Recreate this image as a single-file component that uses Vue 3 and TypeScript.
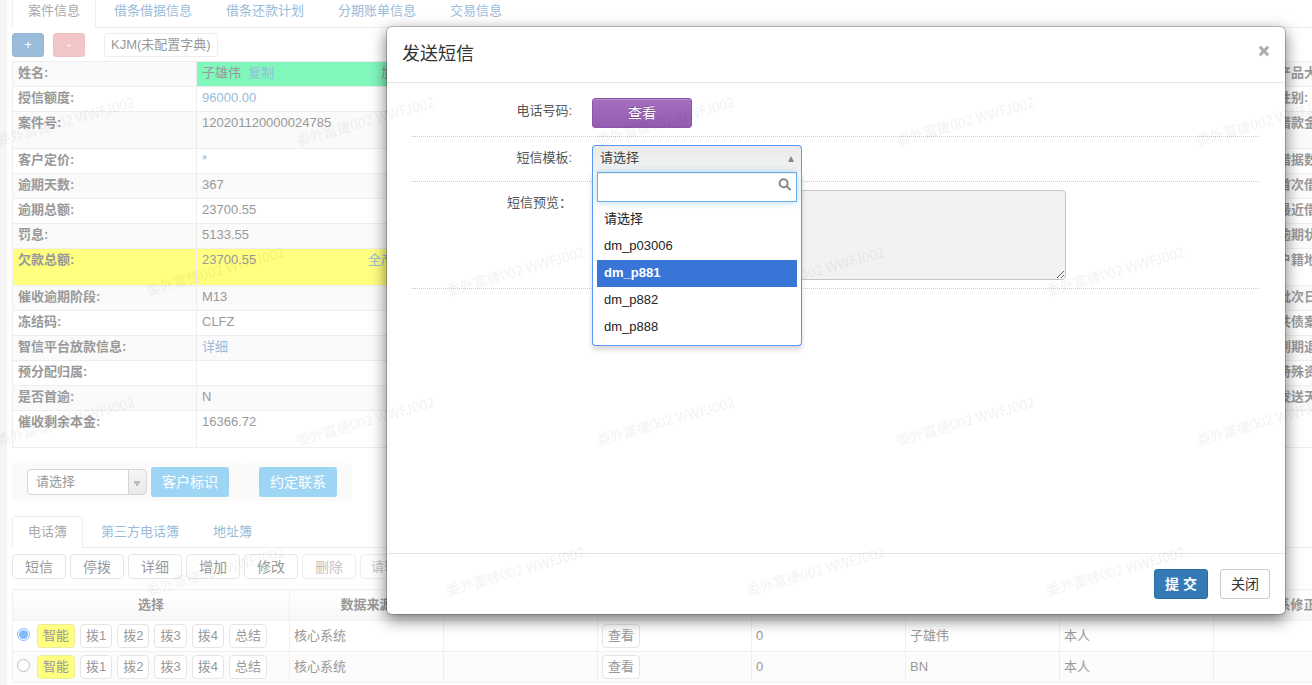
<script setup lang="ts">
import { ref } from 'vue'

interface InfoRow {
  label: string
  value: string
  kind?: 'link' | 'name' | 'debt'
  right: string
  tall?: boolean
}

const mainTabs = ['案件信息', '借条借据信息', '借条还款计划', '分期账单信息', '交易信息']
const bookTabs = ['电话簿', '第三方电话簿', '地址簿']

const infoRows: InfoRow[] = [
  { label: '姓名:', value: '子雄伟', kind: 'name', right: '产品大类:' },
  { label: '授信额度:', value: '96000.00', kind: 'link', right: '性别:' },
  { label: '案件号:', value: '120201120000024785', right: '借款金额:', tall: true },
  { label: '客户定价:', value: '*', kind: 'link', right: '借据数:' },
  { label: '逾期天数:', value: '367', right: '首次借款:' },
  { label: '逾期总额:', value: '23700.55', right: '最近借款:' },
  { label: '罚息:', value: '5133.55', right: '逾期状态:' },
  { label: '欠款总额:', value: '23700.55', kind: 'debt', right: '户籍地:', tall: true },
  { label: '催收逾期阶段:', value: 'M13', right: '批次日:' },
  { label: '冻结码:', value: 'CLFZ', right: '共债案件:' },
  { label: '智信平台放款信息:', value: '详细', kind: 'link', right: '到期退案:' },
  { label: '预分配归属:', value: '', right: '特殊资产:' },
  { label: '是否首逾:', value: 'N', right: '发送天数:' },
  { label: '催收剩余本金:', value: '16366.72', right: '', tall: true },
]

const tools = ['短信', '停拨', '详细', '增加', '修改']
const dials = ['拨1', '拨2', '拨3', '拨4', '总结']
const contacts = [
  { id: 1, source: '核心系统', count: '0', name: '子雄伟', relation: '本人' },
  { id: 2, source: '核心系统', count: '0', name: 'BN', relation: '本人' },
]
const picked = ref(1)

const templates = ['请选择', 'dm_p03006', 'dm_p881', 'dm_p882', 'dm_p888']
const active = ref('dm_p881')
const search = ref('')
const preview = ref('')
</script>

<template>
  <div class="app">
    <main class="page">
      <nav class="tabs main-tabs">
        <a v-for="(t, i) in mainTabs" :key="t" href="#" :class="{ on: i === 0 }">{{ t }}</a>
      </nav>

      <div class="actions">
        <button type="button" class="sq blue">+</button>
        <button type="button" class="sq red">-</button>
        <button type="button" class="btn kjm">KJM(未配置字典)</button>
      </div>

      <table class="info">
        <colgroup>
          <template v-for="n in 4" :key="n">
            <col class="c-label" />
            <col class="c-value" />
          </template>
        </colgroup>
        <tbody>
          <tr v-for="r in infoRows" :key="r.label" :class="[r.kind, { tall: r.tall }]">
            <th scope="row">{{ r.label }}</th>
            <td>
              <div v-if="r.kind === 'name'" class="pair">
                <span>{{ r.value }}&nbsp; <a href="#">复制</a></span><span>加入</span>
              </div>
              <div v-else-if="r.kind === 'debt'" class="pair">
                <span>{{ r.value }}</span><a href="#">全产品</a>
              </div>
              <a v-else-if="r.kind === 'link'" href="#">{{ r.value }}</a>
              <template v-else>{{ r.value }}</template>
            </td>
            <td class="bare" colspan="4"></td>
            <th scope="row">{{ r.right }}</th>
            <td></td>
          </tr>
        </tbody>
      </table>

      <div class="marks">
        <div class="well">
          <select class="pick" aria-label="客户标识">
            <option>请选择</option>
          </select>
          <button type="button" class="sky">客户标识</button>
        </div>
        <div class="well">
          <button type="button" class="sky">约定联系</button>
        </div>
      </div>

      <nav class="tabs book-tabs">
        <a v-for="(t, i) in bookTabs" :key="t" href="#" :class="{ on: i === 0 }">{{ t }}</a>
      </nav>

      <div class="tools">
        <button v-for="t in tools" :key="t" type="button" class="btn">{{ t }}</button>
        <button type="button" class="btn" disabled>删除</button>
        <select class="btn tool-pick" aria-label="批量操作" disabled>
          <option>请输入</option>
        </select>
      </div>

      <table class="book">
        <colgroup>
          <col class="b-first" />
          <col v-for="n in 7" :key="n" class="b-col" />
        </colgroup>
        <thead>
          <tr>
            <th>选择</th>
            <th>数据来源</th>
            <th></th>
            <th></th>
            <th></th>
            <th></th>
            <th></th>
            <th>联系修正</th>
          </tr>
        </thead>
        <tbody>
          <tr v-for="c in contacts" :key="c.id">
            <td>
              <div class="row-tools">
                <input v-model="picked" type="radio" name="contact" :value="c.id" :aria-label="c.name" />
                <button type="button" class="mini smart">智能</button>
                <button v-for="d in dials" :key="d" type="button" class="mini">{{ d }}</button>
              </div>
            </td>
            <td>{{ c.source }}</td>
            <td></td>
            <td><button type="button" class="mini">查看</button></td>
            <td>{{ c.count }}</td>
            <td>{{ c.name }}</td>
            <td>{{ c.relation }}</td>
            <td></td>
          </tr>
        </tbody>
      </table>
    </main>

    <div class="modal-layer">
      <section class="modal" role="dialog" aria-labelledby="modal-title">
        <header>
          <h4 id="modal-title">发送短信</h4>
          <button type="button" class="close" aria-label="关闭窗口">
            <svg viewBox="0 0 12 12" width="12" height="12"><path d="M1.8 1.8l8.4 8.4M10.2 1.8l-8.4 8.4" /></svg>
          </button>
        </header>

        <form @submit.prevent>
          <div class="field">
            <label for="phone">电话号码:</label>
            <button id="phone" type="button" class="violet">查看</button>
          </div>
          <div class="field">
            <label for="tpl">短信模板:</label>
            <div class="combo">
              <button id="tpl" type="button" class="combo-head" aria-haspopup="listbox" aria-expanded="true">
                <span>请选择</span>
                <svg viewBox="0 0 6 6" width="6" height="6"><path d="M0 6L3 0L6 6z" /></svg>
              </button>
              <div class="drop">
                <div class="search">
                  <input v-model="search" type="text" aria-label="搜索模板" />
                  <svg viewBox="0 0 14 14" width="14" height="14">
                    <circle cx="5.6" cy="5.2" r="4" />
                    <path d="M8.4 8.1L12.6 12" />
                  </svg>
                </div>
                <ul role="listbox">
                  <li
                    v-for="o in templates"
                    :key="o"
                    role="option"
                    :aria-selected="o === active"
                    :class="{ hot: o === active }"
                    @mouseenter="active = o"
                  >{{ o }}</li>
                </ul>
              </div>
            </div>
          </div>
          <div class="field">
            <label for="preview">短信预览：</label>
            <textarea id="preview" v-model="preview" readonly></textarea>
          </div>
        </form>

        <footer>
          <button type="button" class="submit">提 交</button>
          <button type="button" class="cancel">关闭</button>
        </footer>
      </section>
    </div>

    <svg class="watermark" aria-hidden="true">
      <defs>
        <pattern id="stamp" x="-6" y="-1" width="300" height="300" patternUnits="userSpaceOnUse">
          <text transform="translate(4 147) rotate(-16)">委外富捷002 WWFJ002</text>
          <text transform="translate(154 297) rotate(-16)">委外富捷002 WWFJ002</text>
        </pattern>
      </defs>
      <rect width="100%" height="100%" fill="url(#stamp)" />
    </svg>
  </div>
</template>

<style>
html,
body,
#app {
  height: 100%;
}
body {
  margin: 0;
  overflow: hidden;
}
</style>

<style scoped>
.app {
  position: relative;
  height: 100%;
  overflow: hidden;
  background: #f5f5f5;
  color: #999;
  font: 13px/18px 'Liberation Sans', 'Noto Sans CJK SC', sans-serif;
}
.app * {
  box-sizing: border-box;
}
a {
  color: #99bcdb;
  text-decoration: none;
}
button,
select,
input,
textarea {
  font: inherit;
  color: inherit;
  margin: 0;
}
button {
  padding: 0;
  white-space: nowrap;
}
.page {
  height: 100%;
  margin-left: 7px;
  padding-left: 5px;
  background: #fff;
  overflow: hidden;
}

/* tabs */
.tabs {
  display: flex;
  gap: 2px;
  border-bottom: 1px solid #eee;
}
.tabs a {
  height: 32px;
  padding: 6px 15px;
  border: 1px solid transparent;
  border-bottom: 0;
  margin-bottom: -1px;
}
.tabs a.on {
  color: #aaa;
  background: #fff;
  border-color: #eee;
  border-radius: 4px 4px 0 0;
}
.main-tabs a {
  height: 28px;
  padding: 1px 15px;
}
.main-tabs a.on {
  border-top: 0;
  padding-top: 2px;
  border-radius: 0;
}

.actions {
  display: flex;
  padding: 5px 0 4px;
}
.sq {
  width: 32px;
  height: 24px;
  margin-right: 9px;
  border: 1px solid;
  border-radius: 3px;
  color: #fff;
}
.blue {
  background: #99bcdb;
  border-color: #97b7d3;
}
.red {
  background: #f2c6c6;
  border-color: #efc0c0;
}
.btn {
  border: 1px solid #e5e5e5;
  border-radius: 4px;
  background: #fff;
}
.kjm {
  height: 24px;
  margin-left: 10px;
  padding: 0 6px;
  border-color: #eee;
  border-radius: 3px;
}

/* case information */
table {
  border-collapse: collapse;
  table-layout: fixed;
}
.info {
  width: 1680px;
}
.c-label {
  width: 184px;
}
.c-value {
  width: 236px;
}
.info tr {
  height: 25px;
}
.info tr.tall {
  height: 37px;
}
.info th,
.info td {
  padding: 2px 5px;
  border: 1px solid #eee;
  text-align: left;
  vertical-align: top;
  white-space: nowrap;
}
.info tr:nth-child(odd) {
  background: #fafafa;
}
.info tr.name td:nth-child(2) {
  background: #80f7bb;
}
.info tr.debt {
  background: #ffff80;
}
.info tr.debt .bare,
.info tr.debt .bare ~ * {
  background: #fff;
}
.pair {
  display: flex;
  justify-content: space-between;
  padding-right: 20px;
}

/* marks */
.marks {
  display: flex;
  margin-top: 15px;
}
.well {
  display: flex;
  align-items: center;
  height: 38px;
  padding: 0 15px;
  gap: 4px;
  background: #fafafa;
  border-radius: 4px;
}
.pick {
  width: 120px;
  height: 26px;
  padding: 0 8px;
  appearance: none;
  border: 1px solid #d4d4d4;
  border-radius: 4px;
  background:
    linear-gradient(#d4d4d4, #d4d4d4) right 17px top / 1px 100% no-repeat,
    conic-gradient(from -30deg at 50% 100%, #bbb 60deg, transparent 0) right 6px top 11px / 6px 6px no-repeat,
    linear-gradient(#f6f6f6, #eaeaea) right / 17px 100% no-repeat,
    #fff;
}
.sky {
  width: 78px;
  height: 30px;
  border: 0;
  border-radius: 3px;
  background: #9fd5f4;
  color: #fff;
  font-size: 14px;
}

/* phone book */
.book-tabs {
  margin-top: 15px;
}
.tools {
  display: flex;
  gap: 4px;
  padding: 6px 0 10px;
}
.tools .btn {
  width: 54px;
  height: 25px;
  font-size: 14px;
}
.tools .btn:disabled {
  color: #c4c4c4;
  border-color: #eee;
  opacity: 1;
}
.tools .tool-pick {
  width: 120px;
  padding: 0 10px;
  font-size: 13px;
  appearance: none;
}
.book {
  width: 1355px;
}
.b-first {
  width: 277px;
}
.b-col {
  width: 154px;
}
.book tr {
  height: 31px;
}
.book th,
.book td {
  padding: 0 4px;
  border: 1px solid #f0f0f0;
  text-align: left;
}
.book th {
  text-align: center;
  background: linear-gradient(#fff, #f7f7f7);
}
.book tbody tr:nth-child(even) {
  background: #fcfcfc;
}
.row-tools {
  display: flex;
  align-items: center;
  gap: 5px;
}
.row-tools input {
  width: 13px;
  height: 13px;
  margin: 0 2px 4px 0;
  appearance: none;
  border: 1px solid #bbb;
  border-radius: 50%;
  background: #fff;
}
.row-tools input:checked {
  border-color: #80bbff;
  background: radial-gradient(circle, #80bbff 4px, #fff 5px);
}
.mini {
  min-width: 32px;
  height: 24px;
  padding: 0 5px;
  border: 1px solid #e5e5e5;
  border-radius: 4px;
  background: #fff;
}
.smart {
  background: #ffff80;
  border-color: #ececa0;
}

/* dialog */
.modal-layer {
  position: absolute;
  inset: 0;
  display: flex;
  justify-content: flex-end;
  align-items: flex-start;
  padding: 26px 26px 0;
}
.modal {
  width: 900px;
  border: 1px solid rgba(0, 0, 0, 0.2);
  border-radius: 6px;
  background: #fff;
  background-clip: padding-box;
  box-shadow: 0 5px 15px rgba(0, 0, 0, 0.5);
  color: #333;
}
.modal header {
  display: flex;
  justify-content: space-between;
  align-items: flex-start;
  padding: 15px;
  border-bottom: 1px solid #e5e5e5;
}
h4 {
  margin: 0;
  font-size: 18px;
  font-weight: 400;
  line-height: 25px;
}
.close {
  height: 18px;
  border: 0;
  background: none;
}
.close svg {
  display: block;
  fill: none;
  stroke: #aaa;
  stroke-width: 3;
}
form {
  min-height: 470px;
  padding: 7px 25px;
}
.field {
  display: flex;
  gap: 20px;
  padding: 8px 0;
  border-bottom: 1px dotted #ccc;
}
.field label {
  width: 160px;
  padding-top: 4px;
  text-align: right;
  color: #555;
}
.violet {
  width: 100px;
  height: 30px;
  border: 1px solid #8d55a8;
  border-radius: 3px;
  background: linear-gradient(#a56fbe, #955bb0);
  box-shadow: inset 0 1px 0 rgba(255, 255, 255, 0.2);
  color: #fff;
  font-size: 14px;
  text-shadow: 0 -1px 0 rgba(0, 0, 0, 0.25);
}
.combo {
  position: relative;
  width: 210px;
  height: 28px;
}
.combo-head {
  display: flex;
  justify-content: space-between;
  align-items: center;
  width: 100%;
  height: 28px;
  padding: 0 7px 3px;
  border: 1px solid #5897fb;
  border-bottom: 0;
  border-radius: 4px 4px 0 0;
  background: linear-gradient(#eaeaea, #f4f4f4 90%);
  color: #444;
}
.combo-head svg {
  margin-top: 2px;
  fill: #888;
}
.drop {
  position: absolute;
  z-index: 2;
  top: 27px;
  left: 0;
  width: 100%;
  padding: 0 4px 4px;
  border: 1px solid #5897fb;
  border-top: 0;
  border-radius: 0 0 4px 4px;
  background: #fff;
  box-shadow: 0 4px 5px rgba(0, 0, 0, 0.15);
}
.search {
  position: relative;
}
.search input {
  display: block;
  width: 100%;
  height: 30px;
  padding: 0 24px 0 6px;
  border: 1px solid #66afe9;
  background: #fff;
  outline: 0;
  box-shadow: inset 0 1px 1px rgba(0, 0, 0, 0.08), 0 0 8px rgba(102, 175, 233, 0.5);
}
.search svg {
  position: absolute;
  top: 6px;
  right: 5px;
  fill: none;
  stroke: #888;
  stroke-width: 2;
}
ul {
  margin: 4px 0 0;
  padding: 0;
  list-style: none;
  color: #222;
}
li {
  height: 27px;
  padding: 0 7px;
  line-height: 25px;
}
.hot {
  background: #3875d7;
  color: #fff;
  font-weight: 700;
}
textarea {
  display: block;
  width: 474px;
  height: 90px;
  padding: 6px;
  border: 1px solid #c6c6c6;
  border-radius: 4px;
  background: #f2f2f2;
}
.modal footer {
  display: flex;
  justify-content: flex-end;
  gap: 12px;
  padding: 15px;
  border-top: 1px solid #e5e5e5;
}
.modal footer button {
  height: 30px;
  border: 1px solid #ccc;
  border-radius: 3px;
  background: #fff;
  font-size: 14px;
}
.modal footer .cancel {
  width: 50px;
}
.modal footer .submit {
  width: 54px;
  border-color: #2e6da4;
  background: #337ab7;
  color: #fff;
  font-weight: 700;
}

.watermark {
  position: absolute;
  inset: 0;
  width: 100%;
  height: 100%;
  pointer-events: none;
}
.watermark text {
  font: 14px 'Noto Sans CJK SC', sans-serif;
  fill: rgba(0, 0, 0, 0.05);
}
</style>
